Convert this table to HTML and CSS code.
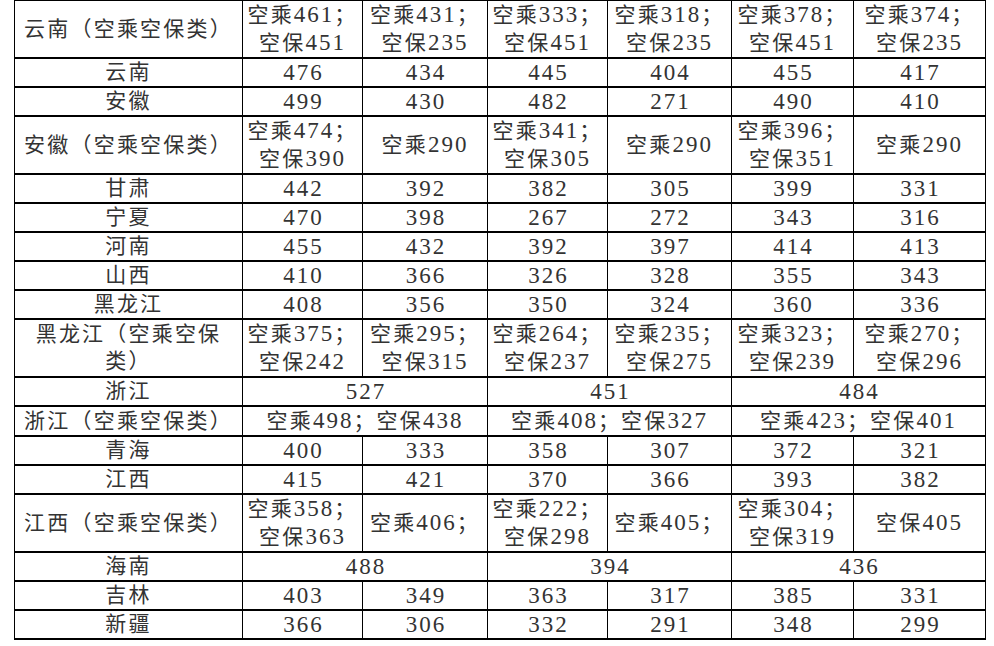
FILE: index.html
```html
<!DOCTYPE html>
<html lang="zh-CN">
<head>
<meta charset="utf-8">
<title>分数线</title>
<link rel="stylesheet" href="styles.css">
</head>
<body>
<table class="scores">
  <colgroup>
    <col class="c-name">
    <col class="c1"><col class="c2"><col class="c3"><col class="c4"><col class="c5"><col class="c6">
  </colgroup>
  <tbody>
    <tr class="dbl"><td>云南（空乘空保类）</td><td>空乘<span class="n">461</span>；<br>空保<span class="n">451</span></td><td>空乘<span class="n">431</span>；<br>空保<span class="n">235</span></td><td>空乘<span class="n">333</span>；<br>空保<span class="n">451</span></td><td>空乘<span class="n">318</span>；<br>空保<span class="n">235</span></td><td>空乘<span class="n">378</span>；<br>空保<span class="n">451</span></td><td>空乘<span class="n">374</span>；<br>空保<span class="n">235</span></td></tr>
    <tr><td>云南</td><td class="n">476</td><td class="n">434</td><td class="n">445</td><td class="n">404</td><td class="n">455</td><td class="n">417</td></tr>
    <tr><td>安徽</td><td class="n">499</td><td class="n">430</td><td class="n">482</td><td class="n">271</td><td class="n">490</td><td class="n">410</td></tr>
    <tr class="dbl"><td>安徽（空乘空保类）</td><td>空乘<span class="n">474</span>；<br>空保<span class="n">390</span></td><td>空乘<span class="n">290</span></td><td>空乘<span class="n">341</span>；<br>空保<span class="n">305</span></td><td>空乘<span class="n">290</span></td><td>空乘<span class="n">396</span>；<br>空保<span class="n">351</span></td><td>空乘<span class="n">290</span></td></tr>
    <tr><td>甘肃</td><td class="n">442</td><td class="n">392</td><td class="n">382</td><td class="n">305</td><td class="n">399</td><td class="n">331</td></tr>
    <tr><td>宁夏</td><td class="n">470</td><td class="n">398</td><td class="n">267</td><td class="n">272</td><td class="n">343</td><td class="n">316</td></tr>
    <tr><td>河南</td><td class="n">455</td><td class="n">432</td><td class="n">392</td><td class="n">397</td><td class="n">414</td><td class="n">413</td></tr>
    <tr><td>山西</td><td class="n">410</td><td class="n">366</td><td class="n">326</td><td class="n">328</td><td class="n">355</td><td class="n">343</td></tr>
    <tr><td>黑龙江</td><td class="n">408</td><td class="n">356</td><td class="n">350</td><td class="n">324</td><td class="n">360</td><td class="n">336</td></tr>
    <tr class="dbl"><td>黑龙江（空乘空保<br>类）</td><td>空乘<span class="n">375</span>；<br>空保<span class="n">242</span></td><td>空乘<span class="n">295</span>；<br>空保<span class="n">315</span></td><td>空乘<span class="n">264</span>；<br>空保<span class="n">237</span></td><td>空乘<span class="n">235</span>；<br>空保<span class="n">275</span></td><td>空乘<span class="n">323</span>；<br>空保<span class="n">239</span></td><td>空乘<span class="n">270</span>；<br>空保<span class="n">296</span></td></tr>
    <tr><td>浙江</td><td colspan="2" class="n">527</td><td colspan="2" class="n">451</td><td colspan="2" class="n">484</td></tr>
    <tr><td>浙江（空乘空保类）</td><td colspan="2">空乘<span class="n">498</span>；空保<span class="n">438</span></td><td colspan="2">空乘<span class="n">408</span>；空保<span class="n">327</span></td><td colspan="2">空乘<span class="n">423</span>；空保<span class="n">401</span></td></tr>
    <tr><td>青海</td><td class="n">400</td><td class="n">333</td><td class="n">358</td><td class="n">307</td><td class="n">372</td><td class="n">321</td></tr>
    <tr><td>江西</td><td class="n">415</td><td class="n">421</td><td class="n">370</td><td class="n">366</td><td class="n">393</td><td class="n">382</td></tr>
    <tr class="dbl"><td>江西（空乘空保类）</td><td>空乘<span class="n">358</span>；<br>空保<span class="n">363</span></td><td>空乘<span class="n">406</span>；</td><td>空乘<span class="n">222</span>；<br>空保<span class="n">298</span></td><td>空乘<span class="n">405</span>；</td><td>空乘<span class="n">304</span>；<br>空保<span class="n">319</span></td><td>空保<span class="n">405</span></td></tr>
    <tr><td>海南</td><td colspan="2" class="n">488</td><td colspan="2" class="n">394</td><td colspan="2" class="n">436</td></tr>
    <tr><td>吉林</td><td class="n">403</td><td class="n">349</td><td class="n">363</td><td class="n">317</td><td class="n">385</td><td class="n">331</td></tr>
    <tr><td>新疆</td><td class="n">366</td><td class="n">306</td><td class="n">332</td><td class="n">291</td><td class="n">348</td><td class="n">299</td></tr>
  </tbody>
</table>
</body>
</html>
```
FILE: styles.css
```css
html, body {
  background: #ffffff;
}
body {
  margin: -1px 0 0 14px;
  padding: 0;
}
.scores {
  border-collapse: collapse;
  table-layout: fixed;
  width: 972px;
  font-family: "Liberation Serif", "Noto Sans CJK SC", serif;
  font-size: 21px;
  letter-spacing: 2.2px;
  color: #333;
}
.c-name { width: 228px; }
.c1 { width: 120px; }
.c2 { width: 125px; }
.c3 { width: 120px; }
.c4 { width: 124px; }
.c5 { width: 122px; }
.c6 { width: 132px; }
.scores tr {
  height: 29px;
}
.scores tr.dbl {
  height: 58px;
}
.scores td {
  border: 1px solid #000;
  border-top-width: 2px;
  border-bottom-width: 2px;
  padding: 0 2px;
  text-align: center;
  vertical-align: middle;
  line-height: 27px;
}
.scores .n {
  font-family: "Liberation Serif", serif;
  font-size: 23px;
  letter-spacing: 2px;
}
.scores td.n {
  padding-left: 4px;
}
```
